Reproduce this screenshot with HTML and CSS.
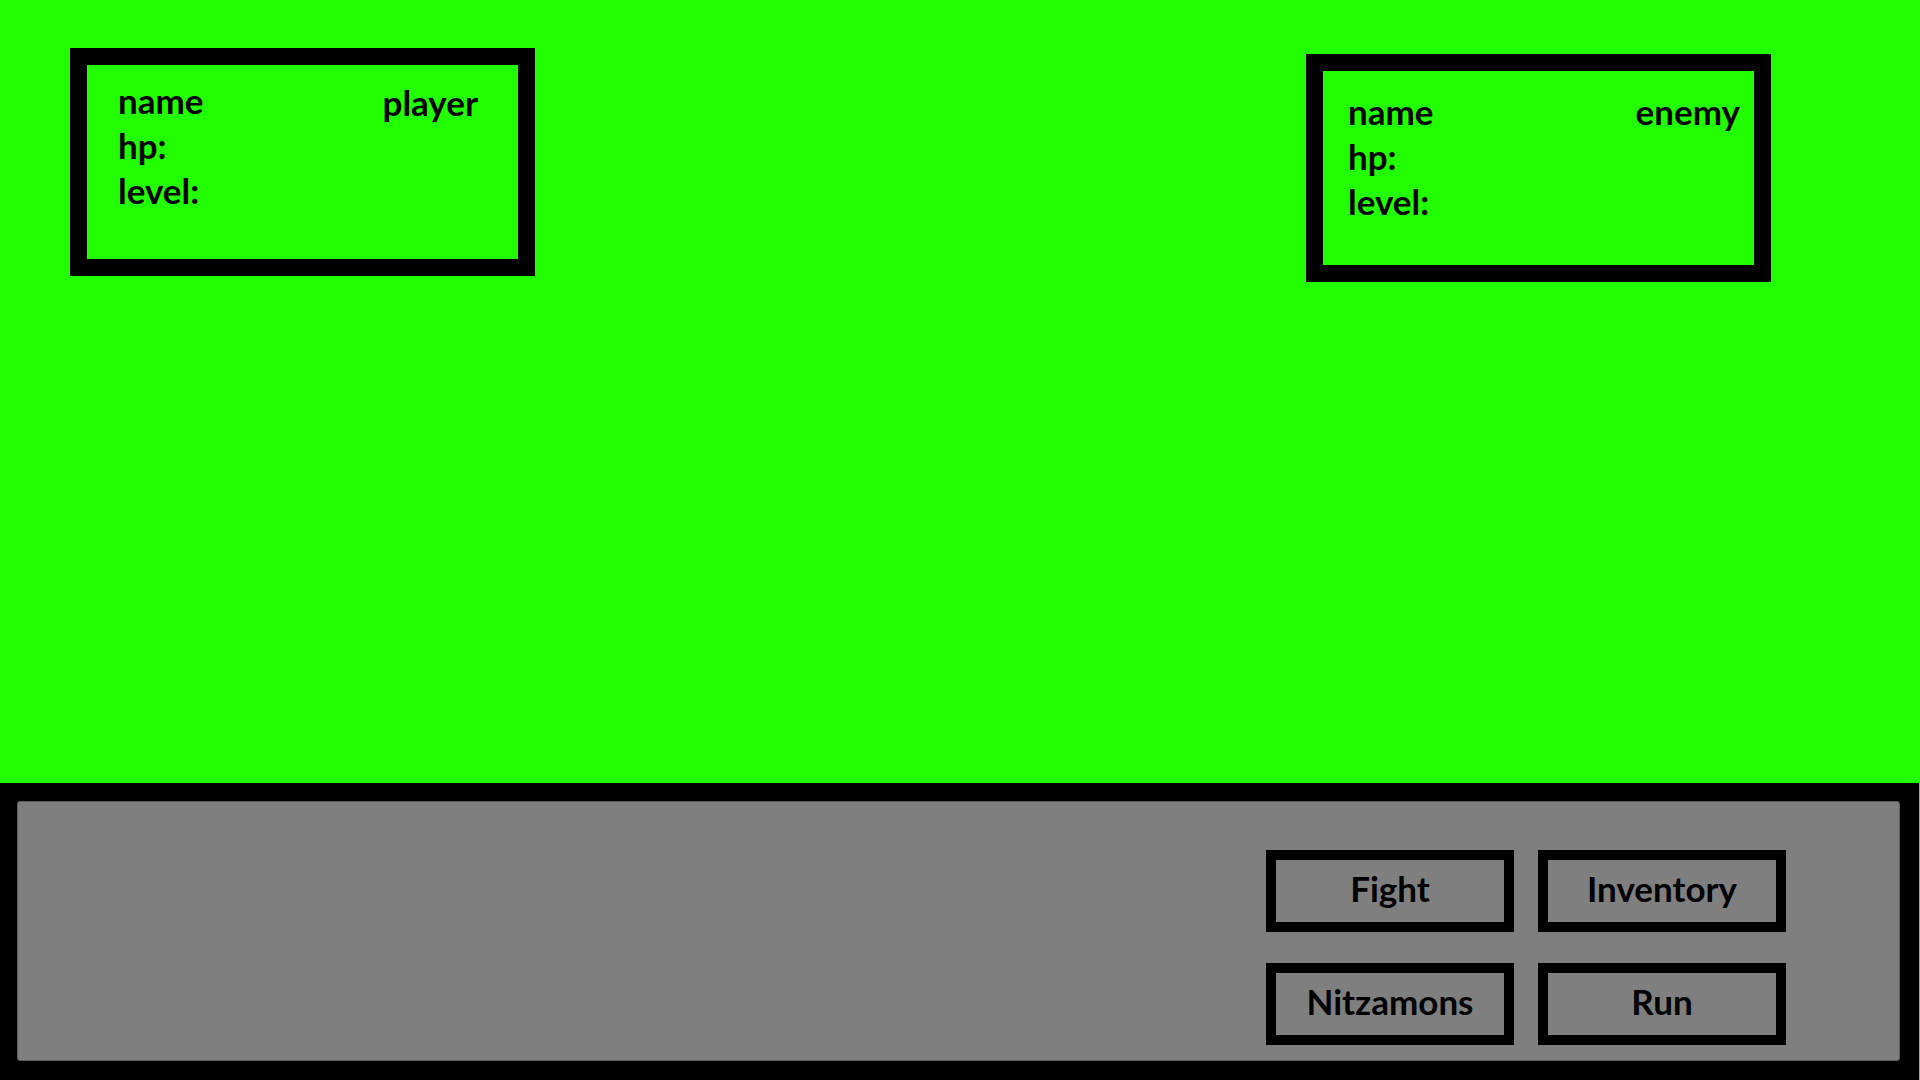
FILE: index.html
```html
<!DOCTYPE html>
<html lang="en">
<head>
  <meta charset="UTF-8" />
  <meta name="viewport" content="width=device-width, initial-scale=1.0"/>
  <title>Battle</title>
  <link rel="stylesheet" href="styles.css">
</head>
<body>
  <div class="arena">
    <div class="card card-player">
      <div class="card-top">
        <span>name</span>
        <span class="tag tag-player">player</span>
      </div>
      <div>hp:</div>
      <div>level:</div>
    </div>

    <div class="card card-enemy">
      <div class="card-top">
        <span>name</span>
        <span class="tag">enemy</span>
      </div>
      <div>hp:</div>
      <div>level:</div>
    </div>
  </div>

  <div class="panel">
    <div class="panel-inner">
      <div class="actions">
        <button class="action">Fight</button>
        <button class="action">Inventory</button>
        <button class="action">Nitzamons</button>
        <button class="action">Run</button>
      </div>
    </div>
  </div>
</body>
</html>
```

FILE: styles.css
```css
body {
  margin: 0;
  height: 1080px;
  font-family: Lato, "Open Sans", sans-serif;
  font-weight: bold;
  font-size: 35px;
  line-height: 45px;
  color: #000;
  background-color: #22ff00;
  display: flex;
  flex-direction: column;
  overflow: hidden;
}

.arena {
  flex: 1;
  display: flex;
  justify-content: space-between;
  align-items: flex-start;
  padding: 48px 149px 0 70px;
}

.card {
  box-sizing: border-box;
  width: 465px;
  height: 228px;
  border: 17px solid #000;
}

.card-player {
  padding: 13px 40px 0 31px;
}

.card-enemy {
  margin-top: 6px;
  padding: 18px 14px 0 25px;
}

.card-top {
  display: flex;
  justify-content: space-between;
}

.tag-player {
  position: relative;
  top: 2px;
}

.panel {
  height: 297px;
  margin-right: 1px;
  box-sizing: border-box;
  background-color: #000;
  padding: 18px 19px 19px 17px;
  display: flex;
}

.panel-inner {
  flex: 1;
  background-color: #7f7f7f;
  border: 1px solid #5e5e5e;
  border-radius: 3px;
  display: flex;
  justify-content: flex-end;
  align-items: flex-start;
  padding: 48px 113px 0 0;
}

.actions {
  display: grid;
  grid-template-columns: 248px 248px;
  grid-auto-rows: 82px;
  column-gap: 24px;
  row-gap: 31px;
}

.action {
  box-sizing: border-box;
  border: 10px solid #000;
  background: transparent;
  font-family: inherit;
  font-weight: bold;
  font-size: 35px;
  color: #000;
  padding: 0 0 6px;
  cursor: pointer;
}
```
